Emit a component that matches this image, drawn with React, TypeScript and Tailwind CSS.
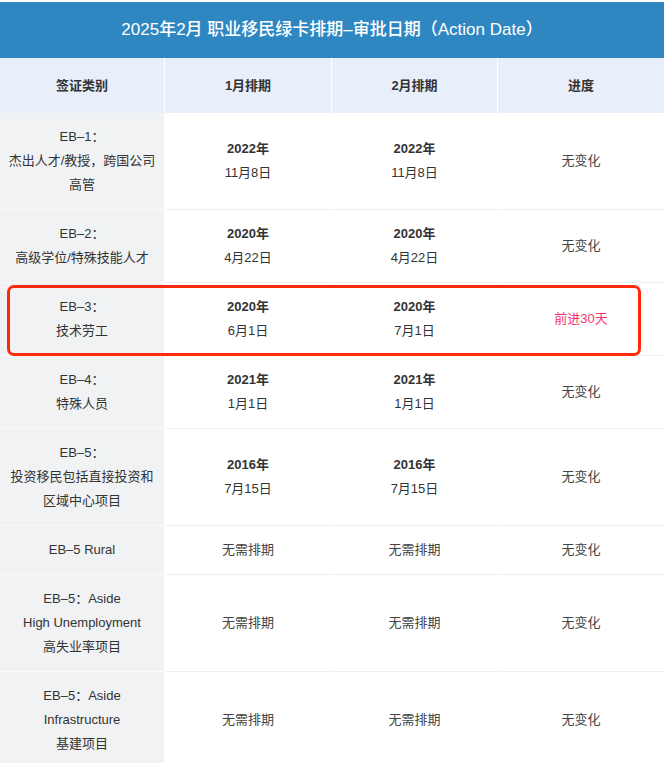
import React from 'react';

type Row = {
    label: string[];
    jan: string[];
    feb: string[];
    progress: string;
    highlight?: boolean;
};

const rows: Row[] = [
    { label: ['EB–1：', '杰出人才/教授，跨国公司', '高管'], jan: ['2022年', '11月8日'], feb: ['2022年', '11月8日'], progress: '无变化' },
    { label: ['EB–2：', '高级学位/特殊技能人才'], jan: ['2020年', '4月22日'], feb: ['2020年', '4月22日'], progress: '无变化' },
    { label: ['EB–3：', '技术劳工'], jan: ['2020年', '6月1日'], feb: ['2020年', '7月1日'], progress: '前进30天', highlight: true },
    { label: ['EB–4：', '特殊人员'], jan: ['2021年', '1月1日'], feb: ['2021年', '1月1日'], progress: '无变化' },
    { label: ['EB–5：', '投资移民包括直接投资和', '区域中心项目'], jan: ['2016年', '7月15日'], feb: ['2016年', '7月15日'], progress: '无变化' },
    { label: ['EB–5 Rural'], jan: ['无需排期'], feb: ['无需排期'], progress: '无变化' },
    { label: ['EB–5：Aside', 'High Unemployment', '高失业率项目'], jan: ['无需排期'], feb: ['无需排期'], progress: '无变化' },
    { label: ['EB–5：Aside', 'Infrastructure', '基建项目'], jan: ['无需排期'], feb: ['无需排期'], progress: '无变化' },
];

const DateCell: React.FC<{ lines: string[] }> = ({ lines }) => (
    <div className="flex flex-col items-center justify-center bg-white border-b border-[#eeeeee] py-3">
        {lines.length === 2 ? (
            <>
                <span className="font-bold text-[#333]">{lines[0]}</span>
                <span className="text-[#333]">{lines[1]}</span>
            </>
        ) : (
            <span className="text-[#444]">{lines[0]}</span>
        )}
    </div>
);

const App: React.FC = () => {
    return (
        <div
            className="w-[664px] pt-[2px] bg-white text-[13px] leading-6"
            style={{ fontFamily: '"Liberation Sans", "Noto Sans CJK SC", sans-serif' }}
        >
            <div className="h-14 bg-[#2e87c1] flex items-center justify-center text-white text-[17px] font-medium">
                2025年2月 职业移民绿卡排期–审批日期（Action Date）
            </div>

            <div className="grid grid-cols-[164px_166px_165px_166px] gap-x-px h-[55px]">
                {['签证类别', '1月排期', '2月排期', '进度'].map((h) => (
                    <div key={h} className="bg-[#e8eefa] flex items-center justify-center font-bold text-[#333]">
                        {h}
                    </div>
                ))}
            </div>

            {rows.map((row, i) => (
                <div key={i} className="relative grid grid-cols-[164px_166px_165px_166px] gap-x-px">
                    <div className="flex flex-col items-center justify-center bg-[#f1f2f4] border-b border-[#fafafa] py-3 text-[#333]">
                        {row.label.map((l) => (
                            <span key={l}>{l}</span>
                        ))}
                    </div>
                    <DateCell lines={row.jan} />
                    <DateCell lines={row.feb} />
                    <div
                        className={`flex items-center justify-center bg-white border-b border-[#eeeeee] py-3 ${
                            row.highlight ? 'text-[#f2336b]' : 'text-[#444]'
                        }`}
                    >
                        {row.progress}
                    </div>
                    {row.highlight && (
                        <div className="absolute left-[7px] right-[23px] top-[2px] bottom-0 border-[3px] border-[#fd2b0c] rounded-[7px] pointer-events-none" />
                    )}
                </div>
            ))}
        </div>
    );
};

export default App;
